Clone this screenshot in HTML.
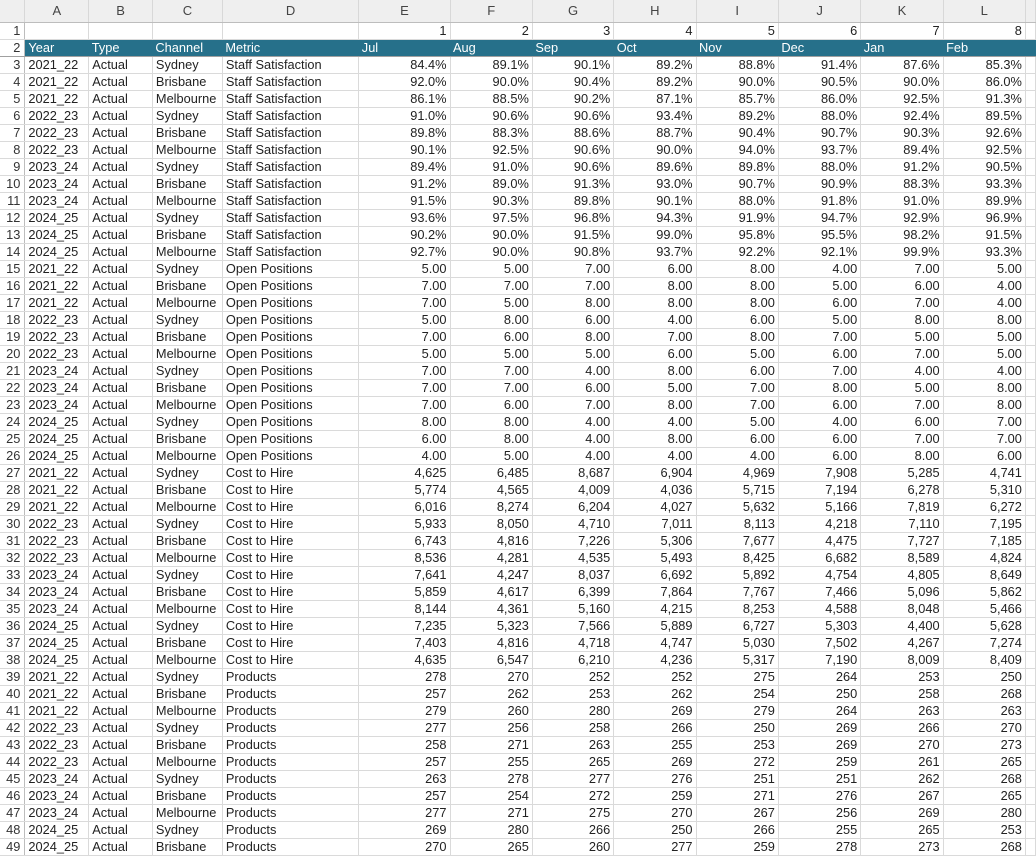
<!DOCTYPE html>
<html><head><meta charset="utf-8"><style>
body{margin:0;background:#fff;width:1036px;height:857px;overflow:hidden;font-family:"Liberation Sans",Arial,sans-serif;}
table{border-collapse:collapse;table-layout:fixed;position:absolute;left:0;top:0;}
td{height:16px;padding:0 3px;border-right:1px solid #dadada;border-bottom:1px solid #dadada;font-size:12.8px;line-height:16px;color:#222;white-space:nowrap;overflow:hidden;}
td:first-child{text-align:right;padding:0 4px 0 0;color:#333;background:#fff;border-right:1px solid #bdbdbd;}
td:nth-child(n+6){text-align:right;}
tr.h td{height:22px;background:#efefef;text-align:center;color:#444;font-size:13px;border-right:1px solid #d8d8d8;border-bottom:1px solid #bdbdbd;}
tr.h td:first-child{border-right:1px solid #d8d8d8;}
tr.t td{background:#26708a;color:#fff;text-align:left;border-right:none;border-bottom:1px solid #a0a0a0;}
tr.t td:first-child{background:#fff;color:#333;text-align:right;border-right:1px solid #bdbdbd;}
</style></head><body>
<table>
<colgroup><col style="width:25px"><col style="width:64px"><col style="width:64px"><col style="width:70px"><col style="width:137px"><col style="width:92px"><col style="width:83px"><col style="width:82px"><col style="width:83px"><col style="width:83px"><col style="width:83px"><col style="width:83px"><col style="width:83px"><col style="width:10px"></colgroup>
<tr class="h"><td></td><td>A</td><td>B</td><td>C</td><td>D</td><td>E</td><td>F</td><td>G</td><td>H</td><td>I</td><td>J</td><td>K</td><td>L</td><td></td></tr>
<tr><td>1</td><td></td><td></td><td></td><td></td><td>1</td><td>2</td><td>3</td><td>4</td><td>5</td><td>6</td><td>7</td><td>8</td><td></td></tr>
<tr class="t"><td>2</td><td>Year</td><td>Type</td><td>Channel</td><td>Metric</td><td>Jul</td><td>Aug</td><td>Sep</td><td>Oct</td><td>Nov</td><td>Dec</td><td>Jan</td><td>Feb</td><td></td></tr>
<tr><td>3</td><td>2021_22</td><td>Actual</td><td>Sydney</td><td>Staff Satisfaction</td><td>84.4%</td><td>89.1%</td><td>90.1%</td><td>89.2%</td><td>88.8%</td><td>91.4%</td><td>87.6%</td><td>85.3%</td><td></td></tr>
<tr><td>4</td><td>2021_22</td><td>Actual</td><td>Brisbane</td><td>Staff Satisfaction</td><td>92.0%</td><td>90.0%</td><td>90.4%</td><td>89.2%</td><td>90.0%</td><td>90.5%</td><td>90.0%</td><td>86.0%</td><td></td></tr>
<tr><td>5</td><td>2021_22</td><td>Actual</td><td>Melbourne</td><td>Staff Satisfaction</td><td>86.1%</td><td>88.5%</td><td>90.2%</td><td>87.1%</td><td>85.7%</td><td>86.0%</td><td>92.5%</td><td>91.3%</td><td></td></tr>
<tr><td>6</td><td>2022_23</td><td>Actual</td><td>Sydney</td><td>Staff Satisfaction</td><td>91.0%</td><td>90.6%</td><td>90.6%</td><td>93.4%</td><td>89.2%</td><td>88.0%</td><td>92.4%</td><td>89.5%</td><td></td></tr>
<tr><td>7</td><td>2022_23</td><td>Actual</td><td>Brisbane</td><td>Staff Satisfaction</td><td>89.8%</td><td>88.3%</td><td>88.6%</td><td>88.7%</td><td>90.4%</td><td>90.7%</td><td>90.3%</td><td>92.6%</td><td></td></tr>
<tr><td>8</td><td>2022_23</td><td>Actual</td><td>Melbourne</td><td>Staff Satisfaction</td><td>90.1%</td><td>92.5%</td><td>90.6%</td><td>90.0%</td><td>94.0%</td><td>93.7%</td><td>89.4%</td><td>92.5%</td><td></td></tr>
<tr><td>9</td><td>2023_24</td><td>Actual</td><td>Sydney</td><td>Staff Satisfaction</td><td>89.4%</td><td>91.0%</td><td>90.6%</td><td>89.6%</td><td>89.8%</td><td>88.0%</td><td>91.2%</td><td>90.5%</td><td></td></tr>
<tr><td>10</td><td>2023_24</td><td>Actual</td><td>Brisbane</td><td>Staff Satisfaction</td><td>91.2%</td><td>89.0%</td><td>91.3%</td><td>93.0%</td><td>90.7%</td><td>90.9%</td><td>88.3%</td><td>93.3%</td><td></td></tr>
<tr><td>11</td><td>2023_24</td><td>Actual</td><td>Melbourne</td><td>Staff Satisfaction</td><td>91.5%</td><td>90.3%</td><td>89.8%</td><td>90.1%</td><td>88.0%</td><td>91.8%</td><td>91.0%</td><td>89.9%</td><td></td></tr>
<tr><td>12</td><td>2024_25</td><td>Actual</td><td>Sydney</td><td>Staff Satisfaction</td><td>93.6%</td><td>97.5%</td><td>96.8%</td><td>94.3%</td><td>91.9%</td><td>94.7%</td><td>92.9%</td><td>96.9%</td><td></td></tr>
<tr><td>13</td><td>2024_25</td><td>Actual</td><td>Brisbane</td><td>Staff Satisfaction</td><td>90.2%</td><td>90.0%</td><td>91.5%</td><td>99.0%</td><td>95.8%</td><td>95.5%</td><td>98.2%</td><td>91.5%</td><td></td></tr>
<tr><td>14</td><td>2024_25</td><td>Actual</td><td>Melbourne</td><td>Staff Satisfaction</td><td>92.7%</td><td>90.0%</td><td>90.8%</td><td>93.7%</td><td>92.2%</td><td>92.1%</td><td>99.9%</td><td>93.3%</td><td></td></tr>
<tr><td>15</td><td>2021_22</td><td>Actual</td><td>Sydney</td><td>Open Positions</td><td>5.00</td><td>5.00</td><td>7.00</td><td>6.00</td><td>8.00</td><td>4.00</td><td>7.00</td><td>5.00</td><td></td></tr>
<tr><td>16</td><td>2021_22</td><td>Actual</td><td>Brisbane</td><td>Open Positions</td><td>7.00</td><td>7.00</td><td>7.00</td><td>8.00</td><td>8.00</td><td>5.00</td><td>6.00</td><td>4.00</td><td></td></tr>
<tr><td>17</td><td>2021_22</td><td>Actual</td><td>Melbourne</td><td>Open Positions</td><td>7.00</td><td>5.00</td><td>8.00</td><td>8.00</td><td>8.00</td><td>6.00</td><td>7.00</td><td>4.00</td><td></td></tr>
<tr><td>18</td><td>2022_23</td><td>Actual</td><td>Sydney</td><td>Open Positions</td><td>5.00</td><td>8.00</td><td>6.00</td><td>4.00</td><td>6.00</td><td>5.00</td><td>8.00</td><td>8.00</td><td></td></tr>
<tr><td>19</td><td>2022_23</td><td>Actual</td><td>Brisbane</td><td>Open Positions</td><td>7.00</td><td>6.00</td><td>8.00</td><td>7.00</td><td>8.00</td><td>7.00</td><td>5.00</td><td>5.00</td><td></td></tr>
<tr><td>20</td><td>2022_23</td><td>Actual</td><td>Melbourne</td><td>Open Positions</td><td>5.00</td><td>5.00</td><td>5.00</td><td>6.00</td><td>5.00</td><td>6.00</td><td>7.00</td><td>5.00</td><td></td></tr>
<tr><td>21</td><td>2023_24</td><td>Actual</td><td>Sydney</td><td>Open Positions</td><td>7.00</td><td>7.00</td><td>4.00</td><td>8.00</td><td>6.00</td><td>7.00</td><td>4.00</td><td>4.00</td><td></td></tr>
<tr><td>22</td><td>2023_24</td><td>Actual</td><td>Brisbane</td><td>Open Positions</td><td>7.00</td><td>7.00</td><td>6.00</td><td>5.00</td><td>7.00</td><td>8.00</td><td>5.00</td><td>8.00</td><td></td></tr>
<tr><td>23</td><td>2023_24</td><td>Actual</td><td>Melbourne</td><td>Open Positions</td><td>7.00</td><td>6.00</td><td>7.00</td><td>8.00</td><td>7.00</td><td>6.00</td><td>7.00</td><td>8.00</td><td></td></tr>
<tr><td>24</td><td>2024_25</td><td>Actual</td><td>Sydney</td><td>Open Positions</td><td>8.00</td><td>8.00</td><td>4.00</td><td>4.00</td><td>5.00</td><td>4.00</td><td>6.00</td><td>7.00</td><td></td></tr>
<tr><td>25</td><td>2024_25</td><td>Actual</td><td>Brisbane</td><td>Open Positions</td><td>6.00</td><td>8.00</td><td>4.00</td><td>8.00</td><td>6.00</td><td>6.00</td><td>7.00</td><td>7.00</td><td></td></tr>
<tr><td>26</td><td>2024_25</td><td>Actual</td><td>Melbourne</td><td>Open Positions</td><td>4.00</td><td>5.00</td><td>4.00</td><td>4.00</td><td>4.00</td><td>6.00</td><td>8.00</td><td>6.00</td><td></td></tr>
<tr><td>27</td><td>2021_22</td><td>Actual</td><td>Sydney</td><td>Cost to Hire</td><td>4,625</td><td>6,485</td><td>8,687</td><td>6,904</td><td>4,969</td><td>7,908</td><td>5,285</td><td>4,741</td><td></td></tr>
<tr><td>28</td><td>2021_22</td><td>Actual</td><td>Brisbane</td><td>Cost to Hire</td><td>5,774</td><td>4,565</td><td>4,009</td><td>4,036</td><td>5,715</td><td>7,194</td><td>6,278</td><td>5,310</td><td></td></tr>
<tr><td>29</td><td>2021_22</td><td>Actual</td><td>Melbourne</td><td>Cost to Hire</td><td>6,016</td><td>8,274</td><td>6,204</td><td>4,027</td><td>5,632</td><td>5,166</td><td>7,819</td><td>6,272</td><td></td></tr>
<tr><td>30</td><td>2022_23</td><td>Actual</td><td>Sydney</td><td>Cost to Hire</td><td>5,933</td><td>8,050</td><td>4,710</td><td>7,011</td><td>8,113</td><td>4,218</td><td>7,110</td><td>7,195</td><td></td></tr>
<tr><td>31</td><td>2022_23</td><td>Actual</td><td>Brisbane</td><td>Cost to Hire</td><td>6,743</td><td>4,816</td><td>7,226</td><td>5,306</td><td>7,677</td><td>4,475</td><td>7,727</td><td>7,185</td><td></td></tr>
<tr><td>32</td><td>2022_23</td><td>Actual</td><td>Melbourne</td><td>Cost to Hire</td><td>8,536</td><td>4,281</td><td>4,535</td><td>5,493</td><td>8,425</td><td>6,682</td><td>8,589</td><td>4,824</td><td></td></tr>
<tr><td>33</td><td>2023_24</td><td>Actual</td><td>Sydney</td><td>Cost to Hire</td><td>7,641</td><td>4,247</td><td>8,037</td><td>6,692</td><td>5,892</td><td>4,754</td><td>4,805</td><td>8,649</td><td></td></tr>
<tr><td>34</td><td>2023_24</td><td>Actual</td><td>Brisbane</td><td>Cost to Hire</td><td>5,859</td><td>4,617</td><td>6,399</td><td>7,864</td><td>7,767</td><td>7,466</td><td>5,096</td><td>5,862</td><td></td></tr>
<tr><td>35</td><td>2023_24</td><td>Actual</td><td>Melbourne</td><td>Cost to Hire</td><td>8,144</td><td>4,361</td><td>5,160</td><td>4,215</td><td>8,253</td><td>4,588</td><td>8,048</td><td>5,466</td><td></td></tr>
<tr><td>36</td><td>2024_25</td><td>Actual</td><td>Sydney</td><td>Cost to Hire</td><td>7,235</td><td>5,323</td><td>7,566</td><td>5,889</td><td>6,727</td><td>5,303</td><td>4,400</td><td>5,628</td><td></td></tr>
<tr><td>37</td><td>2024_25</td><td>Actual</td><td>Brisbane</td><td>Cost to Hire</td><td>7,403</td><td>4,816</td><td>4,718</td><td>4,747</td><td>5,030</td><td>7,502</td><td>4,267</td><td>7,274</td><td></td></tr>
<tr><td>38</td><td>2024_25</td><td>Actual</td><td>Melbourne</td><td>Cost to Hire</td><td>4,635</td><td>6,547</td><td>6,210</td><td>4,236</td><td>5,317</td><td>7,190</td><td>8,009</td><td>8,409</td><td></td></tr>
<tr><td>39</td><td>2021_22</td><td>Actual</td><td>Sydney</td><td>Products</td><td>278</td><td>270</td><td>252</td><td>252</td><td>275</td><td>264</td><td>253</td><td>250</td><td></td></tr>
<tr><td>40</td><td>2021_22</td><td>Actual</td><td>Brisbane</td><td>Products</td><td>257</td><td>262</td><td>253</td><td>262</td><td>254</td><td>250</td><td>258</td><td>268</td><td></td></tr>
<tr><td>41</td><td>2021_22</td><td>Actual</td><td>Melbourne</td><td>Products</td><td>279</td><td>260</td><td>280</td><td>269</td><td>279</td><td>264</td><td>263</td><td>263</td><td></td></tr>
<tr><td>42</td><td>2022_23</td><td>Actual</td><td>Sydney</td><td>Products</td><td>277</td><td>256</td><td>258</td><td>266</td><td>250</td><td>269</td><td>266</td><td>270</td><td></td></tr>
<tr><td>43</td><td>2022_23</td><td>Actual</td><td>Brisbane</td><td>Products</td><td>258</td><td>271</td><td>263</td><td>255</td><td>253</td><td>269</td><td>270</td><td>273</td><td></td></tr>
<tr><td>44</td><td>2022_23</td><td>Actual</td><td>Melbourne</td><td>Products</td><td>257</td><td>255</td><td>265</td><td>269</td><td>272</td><td>259</td><td>261</td><td>265</td><td></td></tr>
<tr><td>45</td><td>2023_24</td><td>Actual</td><td>Sydney</td><td>Products</td><td>263</td><td>278</td><td>277</td><td>276</td><td>251</td><td>251</td><td>262</td><td>268</td><td></td></tr>
<tr><td>46</td><td>2023_24</td><td>Actual</td><td>Brisbane</td><td>Products</td><td>257</td><td>254</td><td>272</td><td>259</td><td>271</td><td>276</td><td>267</td><td>265</td><td></td></tr>
<tr><td>47</td><td>2023_24</td><td>Actual</td><td>Melbourne</td><td>Products</td><td>277</td><td>271</td><td>275</td><td>270</td><td>267</td><td>256</td><td>269</td><td>280</td><td></td></tr>
<tr><td>48</td><td>2024_25</td><td>Actual</td><td>Sydney</td><td>Products</td><td>269</td><td>280</td><td>266</td><td>250</td><td>266</td><td>255</td><td>265</td><td>253</td><td></td></tr>
<tr><td>49</td><td>2024_25</td><td>Actual</td><td>Brisbane</td><td>Products</td><td>270</td><td>265</td><td>260</td><td>277</td><td>259</td><td>278</td><td>273</td><td>268</td><td></td></tr>
</table>
</body></html>
